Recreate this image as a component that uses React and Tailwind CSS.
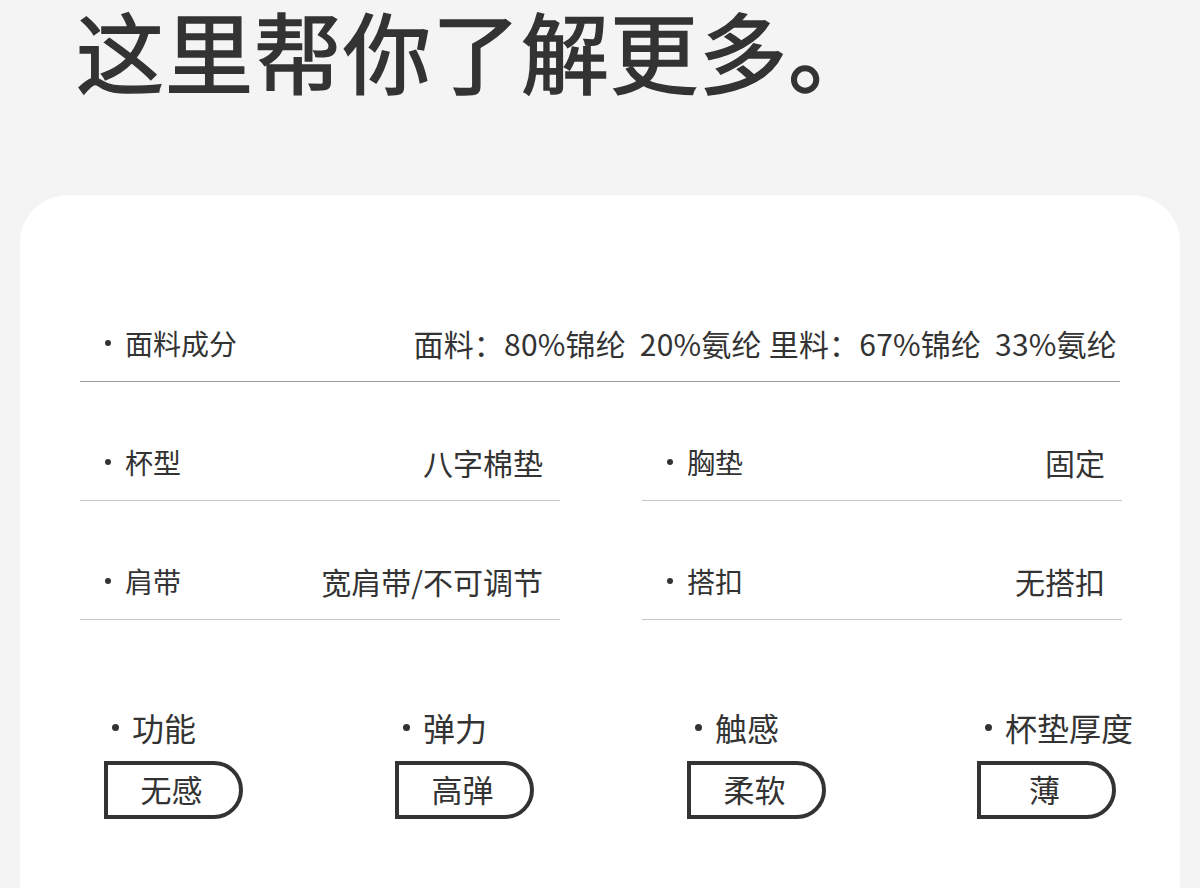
const FONT = { fontFamily: '"Noto Sans CJK SC", "Noto Sans", sans-serif' };

function Dot({ big }) {
  return (
    <span
      className={
        big
          ? "inline-block w-[7px] h-[7px] rounded-full bg-[#333333] mr-[13px]"
          : "inline-block w-[6px] h-[6px] rounded-full bg-[#333333] mr-[14px]"
      }
    />
  );
}

function Row({ label, value, light, className = "", valueClass = "" }) {
  return (
    <div
      className={
        "h-[75px] pb-[3px] flex items-center justify-between border-b " +
        (light ? "border-[#c6c6c6] " : "border-[#9a9a9a] ") +
        className
      }
    >
      <div className="flex items-center pl-[25px] text-[28px] leading-none text-[#333333]">
        <Dot />
        <span>{label}</span>
      </div>
      <div className={"text-[30px] leading-none text-[#333333] whitespace-pre " + valueClass}>{value}</div>
    </div>
  );
}

function Badge({ label, value }) {
  return (
    <div className="flex flex-col">
      <div className="flex items-center pl-[8px] h-[32px] text-[32px] leading-none text-[#333333]">
        <Dot big />
        <span>{label}</span>
      </div>
      <div className="mt-[18px] w-[139px] h-[58px] pb-[3px] border-[4px] border-[#333333] rounded-r-[29px] flex items-center justify-center text-[31px] leading-none text-[#333333] pr-[4px]">
        {value}
      </div>
    </div>
  );
}

export default function App() {
  return (
    <div className="w-[1200px] h-[888px] overflow-hidden bg-[#f4f4f4]" style={FONT}>
      <div className="pl-[76px] pt-[5px] h-[195px]">
        <h1 className="text-[88px] leading-none font-normal text-[#333333] tracking-[1px] [-webkit-text-stroke:1.5px_#333333]">
          这里帮你了解更多。
        </h1>
      </div>
      <div className="mx-[20px] bg-white rounded-t-[48px] pt-[112px] pb-[200px]">
        <div className="px-[60px]">
          <Row
            label="面料成分"
            value={"面料：80%锦纶  20%氨纶 里料：67%锦纶  33%氨纶"}
            className="pr-[3px]"
            valueClass="tracking-[0.2px]"
          />
          <div className="grid grid-cols-[480px_480px] gap-x-[82px] mt-[44px] gap-y-[44px]">
            <Row label="杯型" value="八字棉垫" light className="pr-[17px]" />
            <Row label="胸垫" value="固定" light className="pr-[17px]" />
            <Row label="肩带" value="宽肩带/不可调节" light className="pr-[17px]" />
            <Row label="搭扣" value="无搭扣" light className="pr-[17px]" />
          </div>
        </div>
        <div className="pl-[84px] mt-[91px] grid grid-cols-[291px_292px_290px_200px]">
          <Badge label="功能" value="无感" />
          <Badge label="弹力" value="高弹" />
          <Badge label="触感" value="柔软" />
          <Badge label="杯垫厚度" value="薄" />
        </div>
      </div>
    </div>
  );
}
